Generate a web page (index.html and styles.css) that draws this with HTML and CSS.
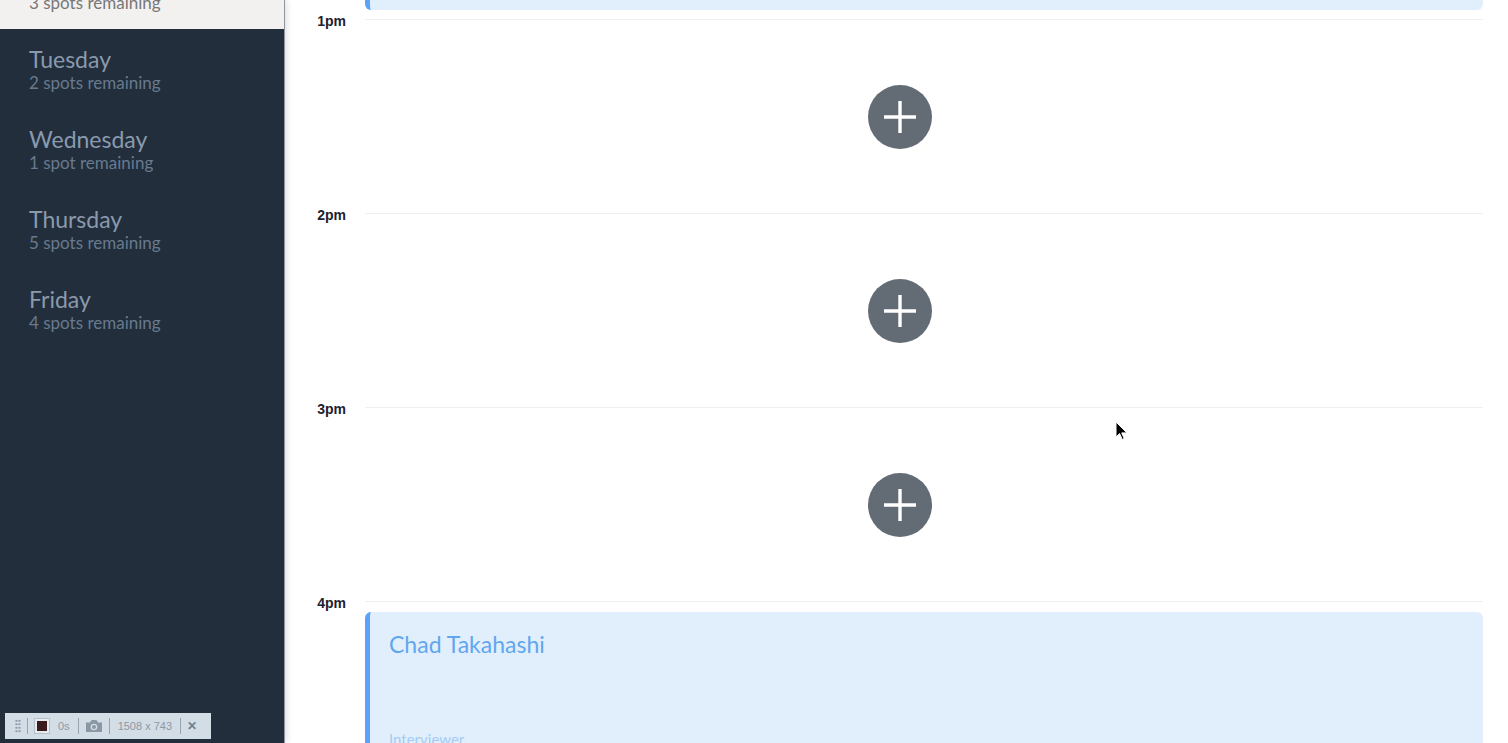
FILE: index.html
```html
<!DOCTYPE html>
<html lang="en">
<head>
<meta charset="utf-8">
<title>Schedule</title>
<link rel="stylesheet" href="styles.css">
</head>
<body>
<div class="app">
  <aside class="sidebar">
    <ul class="days">
      <li class="day active"><div class="day-name">Monday</div><div class="day-spots">3 spots remaining</div></li>
      <li class="day"><div class="day-name">Tuesday</div><div class="day-spots">2 spots remaining</div></li>
      <li class="day"><div class="day-name">Wednesday</div><div class="day-spots">1 spot remaining</div></li>
      <li class="day"><div class="day-name">Thursday</div><div class="day-spots">5 spots remaining</div></li>
      <li class="day"><div class="day-name">Friday</div><div class="day-spots">4 spots remaining</div></li>
    </ul>
  </aside>
  <main class="schedule">
    <div class="slots">
      <div class="slot">
        <div class="time">12pm</div>
        <div class="slot-body"><div class="event"><div class="event-name">Sylvia Palmer</div><div class="event-role">Interviewer</div></div></div>
      </div>
      <div class="slot">
        <div class="time">1pm</div>
        <div class="slot-body empty"><button class="add" aria-label="Add"><svg viewBox="0 0 64 64" width="64" height="64"><path d="M32 16v32M16 32h32" stroke="#fff" stroke-width="3.4" fill="none"/></svg></button></div>
      </div>
      <div class="slot">
        <div class="time">2pm</div>
        <div class="slot-body empty"><button class="add" aria-label="Add"><svg viewBox="0 0 64 64" width="64" height="64"><path d="M32 16v32M16 32h32" stroke="#fff" stroke-width="3.4" fill="none"/></svg></button></div>
      </div>
      <div class="slot">
        <div class="time">3pm</div>
        <div class="slot-body empty"><button class="add" aria-label="Add"><svg viewBox="0 0 64 64" width="64" height="64"><path d="M32 16v32M16 32h32" stroke="#fff" stroke-width="3.4" fill="none"/></svg></button></div>
      </div>
      <div class="slot">
        <div class="time">4pm</div>
        <div class="slot-body"><div class="event"><div class="event-name">Chad Takahashi</div><div class="event-role">Interviewer</div></div></div>
      </div>
    </div>
  </main>
</div>
<svg class="cursor" width="14" height="20" viewBox="0 0 14 20"><path d="M1 1v15l3.6-3.4 2.6 5.8 2-0.9-2.5-5.6H12z" fill="#000" stroke="#fff" stroke-width="1"/></svg>
<div class="recorder">
  <span class="grip"></span>
  <span class="sep"></span>
  <span class="rec"><span class="rec-dot"></span></span>
  <span class="rec-time">0s</span>
  <span class="sep"></span>
  <svg class="cam" width="18" height="14" viewBox="0 0 18 14"><path d="M1 3.5h4l1.5-2.5h5L13 3.5h4v9.5H1z" fill="#8a98a6"/><circle cx="9" cy="8" r="3.3" fill="#d3dde6"/><circle cx="9" cy="8" r="2" fill="#8a98a6"/></svg>
  <span class="sep"></span>
  <span class="rec-size">1508 x 743</span>
  <span class="sep"></span>
  <span class="close">&#x2715;</span>
</div>
</body>
</html>
```
FILE: styles.css
```css
* { box-sizing: border-box; }
html, body { margin: 0; padding: 0; }
body {
  width: 1508px;
  height: 743px;
  overflow: hidden;
  background: #fff;
  font-family: "Lato", "Liberation Sans", sans-serif;
  position: relative;
}
.app {
  display: flex;
  height: 743px;
}
.sidebar {
  width: 285px;
  flex: none;
  background: #222e3c;
  border-right: 1px solid #8d969f;
  box-shadow: 2px 0 6px rgba(0,0,0,0.12);
  position: relative;
  z-index: 1;
  overflow: hidden;
}
.days {
  list-style: none;
  margin: -51px 0 0;
  padding: 0;
}
.day {
  height: 80px;
  padding: 18px 0 0 29px;
}
.day.active { background: #f2f1ef; }
.day-name {
  font-size: 23px;
  line-height: 24px;
  color: #8a9aad;
}
.day-spots {
  font-size: 17px;
  line-height: 24px;
  font-weight: 400;
  color: #687a8e;
}
.day.active .day-name { color: #555; }
.day.active .day-spots { color: #777; }

.schedule {
  flex: 1;
  overflow: hidden;
  padding: 0 25px 0 0;
}
.slots {
  margin-top: -175px;
}
.slot {
  display: grid;
  grid-template-columns: 62px 1fr;
  column-gap: 18px;
  height: 194px;
}
.time {
  text-align: right;
  font-family: "Liberation Sans", Arial, sans-serif;
  font-weight: bold;
  font-size: 14px;
  line-height: 16px;
  color: #1c2230;
  margin-top: -6px;
  padding-right: 1px;
}
.slot-body {
  border-top: 1px solid #efefef;
  padding-top: 10px;
}
.slot-body.empty {
  padding: 0 48px 0 0;
  display: flex;
  align-items: center;
  justify-content: center;
}
.add {
  width: 64px;
  height: 64px;
  border-radius: 50%;
  border: none;
  padding: 0;
  background: #636b75;
  display: flex;
  align-items: center;
  justify-content: center;
  cursor: pointer;
}
.event {
  height: 174px;
  background: #e1effd;
  border-left: 5px solid #5ba3f8;
  border-radius: 6px;
  padding: 18px 19px 0;
  display: flex;
  flex-direction: column;
  justify-content: space-between;
}
.event-name {
  font-size: 23px;
  line-height: 28px;
  color: #62a6ee;
}
.event-role {
  font-size: 15px;
  line-height: 18px;
  font-weight: 400;
  color: #a3cbf3;
  margin-bottom: 38px;
}
.cursor {
  position: absolute;
  left: 1115px;
  top: 421px;
  z-index: 5;
}
.recorder {
  position: absolute;
  left: 5px;
  top: 713px;
  width: 206px;
  height: 26px;
  background: #d3dde6;
  z-index: 5;
  display: flex;
  align-items: center;
  padding: 0 6px 0 10px;
  gap: 6px;
  font-family: "Liberation Sans", Arial, sans-serif;
  font-size: 11px;
  color: #8d99a5;
}
.grip {
  width: 6px;
  height: 14px;
  background-image: radial-gradient(circle, #8a98a6 1px, transparent 1.2px);
  background-size: 3px 3.5px;
}
.sep {
  width: 1px;
  height: 16px;
  background: #97a3ae;
}
.rec {
  width: 16px;
  height: 16px;
  border: 1px solid #b6c0ca;
  background: #e6ebef;
  display: flex;
  align-items: center;
  justify-content: center;
}
.rec-dot {
  width: 10px;
  height: 10px;
  background: #3a1a1d;
}
.rec-time { padding: 0 2px; }
.rec-size { padding: 0 2px; }
.close {
  font-size: 12px;
  font-weight: bold;
  color: #6f7f8f;
}
```
